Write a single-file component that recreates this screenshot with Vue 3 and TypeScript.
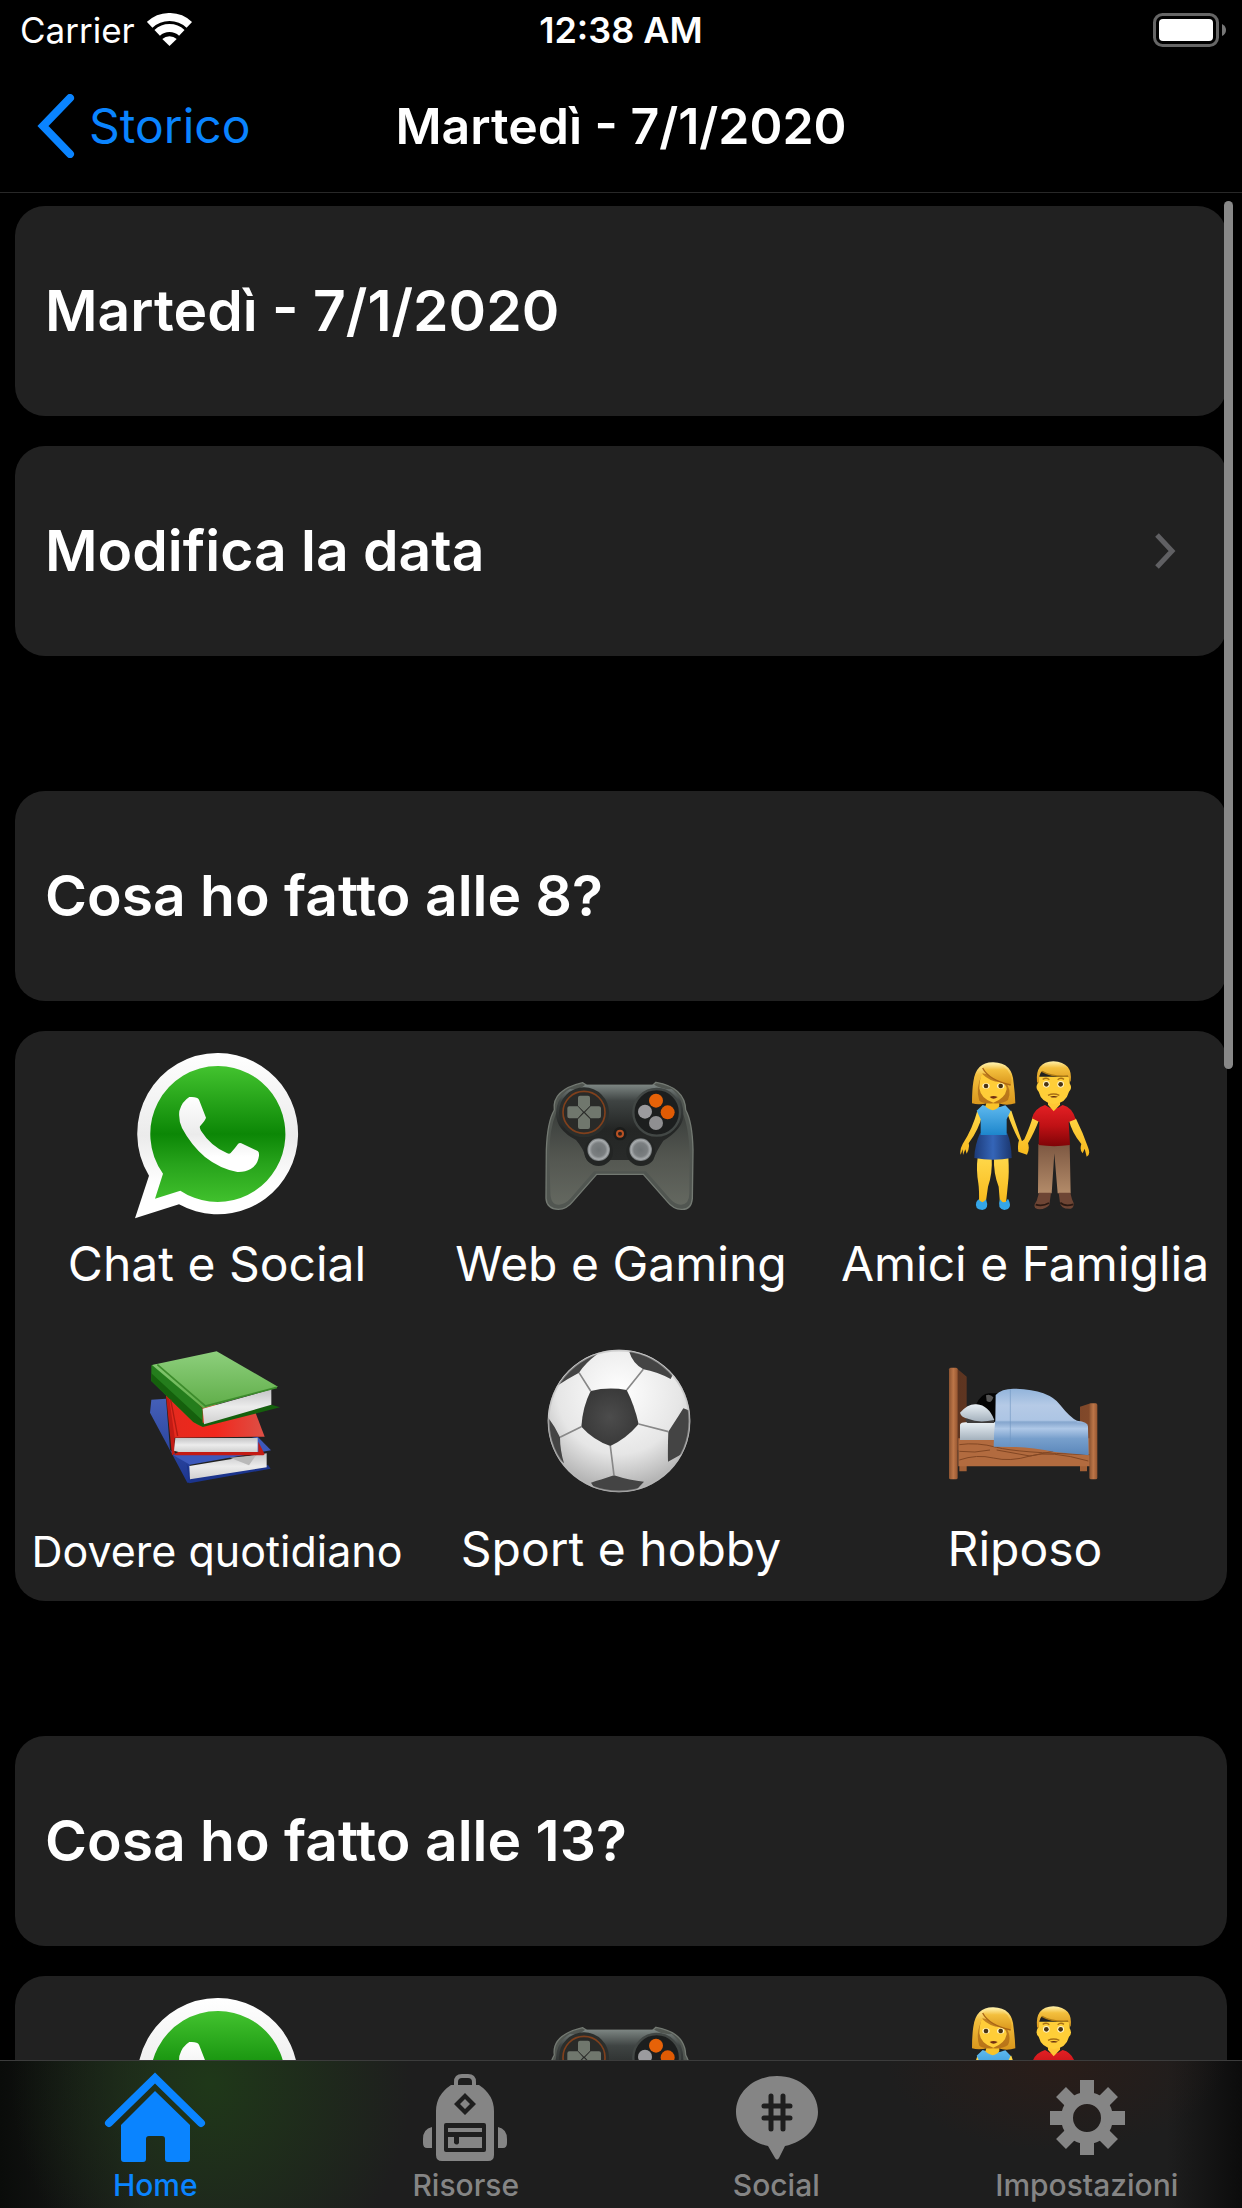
<script setup lang="ts">
interface Activity {
  icon: string
  label: string
  viewBox: string
  compact?: boolean
}

interface HourSection {
  hour: number
  items: Activity[]
  labelled: boolean
}

interface Tab {
  icon: string
  label: string
  active?: boolean
}

const dateLabel = 'Martedì - 7/1/2020'

const activities: Activity[] = [
  { icon: 'chat', label: 'Chat e Social', viewBox: '51 48 540 540' },
  { icon: 'gamepad', label: 'Web e Gaming', viewBox: '33 -12 540 540' },
  { icon: 'couple', label: 'Amici e Famiglia', viewBox: '15 18 540 540' },
  { icon: 'books', label: 'Dovere quotidiano', viewBox: '-9 3 540 540', compact: true },
  { icon: 'ball', label: 'Sport e hobby', viewBox: '3 3 540 540' },
  { icon: 'bed', label: 'Riposo', viewBox: '15 -57 540 540' },
]

// The last section only peeks out above the tab bar, so it carries one row of icons.
const sections: HourSection[] = [
  { hour: 8, items: activities, labelled: true },
  { hour: 13, items: activities.slice(0, 3), labelled: false },
]

const tabs: Tab[] = [
  { icon: 'home', label: 'Home', active: true },
  { icon: 'backpack', label: 'Risorse' },
  { icon: 'social', label: 'Social' },
  { icon: 'gear', label: 'Impostazioni' },
]
</script>

<template>
  <div class="app">
    <svg class="sprite" width="0" height="0" aria-hidden="true">
      <defs>
        <linearGradient id="gWhite" x1="0" y1="0" x2="0" y2="1">
          <stop offset="0" stop-color="#fff" /><stop offset=".5" stop-color="#ebebeb" /><stop offset=".8" stop-color="#fff" />
        </linearGradient>
        <linearGradient id="gGreen" x1="0" y1="0" x2="0" y2="1">
          <stop offset="0" stop-color="#43c32f" /><stop offset=".5" stop-color="#0c8706" /><stop offset=".72" stop-color="#27a31b" /><stop offset="1" stop-color="#41c12d" />
        </linearGradient>
        <linearGradient id="gPad" x1="0" y1="0" x2="0" y2="1">
          <stop offset="0" stop-color="#7d8683" /><stop offset=".2" stop-color="#3f4443" /><stop offset=".55" stop-color="#242625" /><stop offset="1" stop-color="#292b2a" />
        </linearGradient>
        <linearGradient id="gGrip" x1="0" y1="0" x2="0" y2="1">
          <stop offset="0" stop-color="#3a3e3b" /><stop offset=".5" stop-color="#545751" /><stop offset="1" stop-color="#646860" />
        </linearGradient>
        <radialGradient id="gStick">
          <stop offset="0" stop-color="#6f7476" /><stop offset=".6" stop-color="#7b7f81" /><stop offset=".85" stop-color="#a9adaf" /><stop offset="1" stop-color="#6d7173" />
        </radialGradient>
        <linearGradient id="gHair" x1="0" y1="0" x2="0" y2="1">
          <stop offset="0" stop-color="#fff0a8" /><stop offset=".3" stop-color="#f3bf3d" /><stop offset="1" stop-color="#d9961c" />
        </linearGradient>
        <linearGradient id="gSkin" x1="0" y1="0" x2="0" y2="1">
          <stop offset="0" stop-color="#ffd84a" /><stop offset="1" stop-color="#f8b91c" />
        </linearGradient>
        <linearGradient id="gTop" x1="0" y1="0" x2="0" y2="1">
          <stop offset="0" stop-color="#5fb9ee" /><stop offset="1" stop-color="#1d86cc" />
        </linearGradient>
        <linearGradient id="gSkirt">
          <stop offset="0" stop-color="#1d3b78" /><stop offset=".5" stop-color="#3465b8" /><stop offset="1" stop-color="#1c376f" />
        </linearGradient>
        <linearGradient id="gShirt" x1="0" y1="0" x2="0" y2="1">
          <stop offset="0" stop-color="#e32024" /><stop offset=".5" stop-color="#c01115" /><stop offset="1" stop-color="#7f0407" />
        </linearGradient>
        <linearGradient id="gPants" x1="0" y1="0" x2="0" y2="1">
          <stop offset="0" stop-color="#7d5842" /><stop offset="1" stop-color="#b38b69" />
        </linearGradient>
        <linearGradient id="gCover" x1="0" y1="0" x2="0" y2="1">
          <stop offset="0" stop-color="#8dcf7c" /><stop offset="1" stop-color="#5fad48" />
        </linearGradient>
        <linearGradient id="gPages" x1="0" y1="0" x2="0" y2="1">
          <stop offset="0" stop-color="#c4c4c6" /><stop offset=".5" stop-color="#ececec" /><stop offset="1" stop-color="#cfcfcf" />
        </linearGradient>
        <linearGradient id="gRed"><stop offset="0" stop-color="#e32a1e" /><stop offset=".5" stop-color="#f2271c" /><stop offset="1" stop-color="#dd5046" /></linearGradient>
        <linearGradient id="gBlue" x1="0" y1="0" x2="0" y2="1">
          <stop offset="0" stop-color="#4560b8" /><stop offset="1" stop-color="#1c3590" />
        </linearGradient>
        <radialGradient id="gBall" cx=".5" cy=".3" r=".72">
          <stop offset="0" stop-color="#fff" /><stop offset=".6" stop-color="#e6e6e6" /><stop offset="1" stop-color="#a8a8a8" />
        </radialGradient>
        <radialGradient id="gPatch"><stop offset="0" stop-color="#4c4c4c" /><stop offset="1" stop-color="#3a3a3a" /></radialGradient>
        <clipPath id="ballClip"><circle cx="267" cy="273" r="212" /></clipPath>
        <linearGradient id="gWood"><stop offset="0" stop-color="#8c5330" /><stop offset=".5" stop-color="#bd7648" /><stop offset="1" stop-color="#965631" /></linearGradient>
        <linearGradient id="gWoodDark"><stop offset="0" stop-color="#5c3420" /><stop offset="1" stop-color="#82492a" /></linearGradient>
        <linearGradient id="gBlanket" x1="0" y1="0" x2="0" y2="1">
          <stop offset="0" stop-color="#92b4db" /><stop offset=".25" stop-color="#b5cae6" /><stop offset=".47" stop-color="#adc5e4" /><stop offset=".52" stop-color="#8cabd2" /><stop offset=".6" stop-color="#afc8e7" /><stop offset=".75" stop-color="#779fcc" /><stop offset="1" stop-color="#5a86ba" />
        </linearGradient>
        <linearGradient id="gSheet" x1="0" y1="0" x2="0" y2="1">
          <stop offset="0" stop-color="#e9f0f5" /><stop offset="1" stop-color="#a4b1bd" />
        </linearGradient>
      </defs>

      <g id="chat">
        <path fill="url(#gWhite)" d="M325 69A241 242 0 1 1 207 523L75 565L117 437A241 242 0 0 1 325 69Z" />
        <path fill="url(#gGreen)" d="M325 108A203 204 0 1 1 211 482L135 506L159 431A203 204 0 0 1 325 108Z" />
        <path fill="url(#gWhite)" d="M238 201Q262 199 267 209L288 263Q287 269 270 289Q268 294 273 302Q302 348 352 370Q358 373 362 369Q375 355 384 342Q388 338 394 340L443 363Q448 366 447 377Q443 405 422 417Q405 427 382 426Q329 416 285 381Q243 345 216 294Q205 271 208 243Q216 214 238 201Z" />
      </g>

      <g id="gamepad">
        <path fill="#515651" stroke="#737972" stroke-width="4" d="M103 180Q95 120 188 98L200 106L398 106L408 97Q495 112 497 180Q517 215 519 300L517 445Q514 480 484 478Q460 478 442 455L370 373L230 373L158 455Q140 478 115 478Q80 476 78 445L79 300Q82 215 103 180Z" />
        <path fill="url(#gGrip)" d="M108 190Q88 240 88 310L91 425Q91 465 117 464Q137 462 153 443L222 364L378 364L448 444Q465 464 483 464Q508 463 508 430L509 310Q506 230 488 190Z" />
        <path fill="url(#gPad)" d="M196 104H402Q430 120 455 117Q492 145 490 200Q486 238 430 272Q408 305 400 330Q385 352 350 343L330 330H270L245 343Q210 350 198 325Q190 295 168 270Q108 240 108 190Q110 140 150 117Q175 122 196 104Z" />
        <circle cx="192" cy="187" r="75" fill="#2b2e2c" />
        <circle cx="192" cy="187" r="63" fill="#292a28" stroke="#80401c" stroke-width="5" />
        <path fill="#70776d" d="M174 143Q174 137 180 137H204Q210 137 210 143V167L192 185L174 167ZM174 231Q174 237 180 237H204Q210 237 210 231V207L192 189L174 207ZM148 169H173L189 187L173 205H148Q142 205 142 199V175Q142 169 148 169ZM237 169H212L195 187L212 205H237Q243 205 243 199V175Q243 169 237 169Z" />
        <circle cx="410" cy="187" r="70" fill="#1c1e1e" stroke="#424745" stroke-width="7" />
        <circle cx="408" cy="152" r="21" fill="#e66208" /><circle cx="443" cy="187" r="21" fill="#e05b04" />
        <circle cx="375" cy="185" r="21" fill="#9b9b9e" /><circle cx="408" cy="219" r="21" fill="#8f8f91" />
        <circle cx="300" cy="251" r="20" fill="#1a1c1b" /><circle cx="300" cy="251" r="9" fill="#2a211c" stroke="#b95123" stroke-width="6" />
        <circle cx="236" cy="305" r="43" fill="#232524" /><circle cx="362" cy="305" r="43" fill="#232524" />
        <circle cx="236" cy="299" r="34" fill="url(#gStick)" /><circle cx="362" cy="299" r="34" fill="url(#gStick)" />
      </g>

      <g id="couple">
        <path fill="url(#gSkin)" d="M142 212Q128 265 98 312Q88 330 92 344L98 328L99 345L106 328L110 341Q120 324 116 310Q146 270 158 222ZM230 215Q250 270 267 301Q262 315 265 335L291 344Q300 326 294 310Q312 280 328 238L308 232Q300 260 283 298L276 304Q258 255 244 212ZM416 238Q426 280 454 312Q448 330 458 340L464 326L470 350Q483 345 474 322Q460 280 438 236Z" />
        <path fill="url(#gSkin)" d="M143 352H185Q188 400 174 440L167 490H147Q148 450 145 430Q138 390 143 352ZM192 352H235Q238 400 234 430L228 490H210L206 440Q190 400 192 352Z" />
        <path fill="#35a6e8" d="M145 478Q158 495 168 478Q179 508 157 510Q132 508 139 486ZM210 478Q222 497 234 476Q250 506 223 510Q200 506 210 478Z" />
        <path fill="url(#gSkirt)" d="M150 280H232Q244 310 245 354Q190 364 133 354Q134 315 150 280Z" />
        <path fill="url(#gTop)" d="M158 195Q192 210 226 196L242 212L230 238V285H152V238L140 212Z" />
        <path fill="#f8c32a" d="M172 180H208V199Q190 222 166 199Z" />
        <path fill="url(#gHair)" d="M126 190Q126 150 130 125Q138 66 190 67Q248 68 251 130Q255 160 256 190Q230 198 205 190H172Q145 196 126 190Z" />
        <path fill="#a96516" d="M158 100Q135 145 148 182Q160 192 190 190Q218 192 234 180Q248 150 220 115Z" opacity=".7" />
        <path fill="#ffcd38" d="M156 101Q180 125 210 126Q230 131 230 148Q225 176 190 188Q153 178 148 145Q149 115 156 101Z" />
        <path fill="url(#gHair)" d="M158 84Q176 120 242 135Q248 122 241 106Q226 70 190 70Q170 70 158 84Z" />
        <path d="M158 84Q176 120 242 135" fill="none" stroke="#a96516" stroke-width="4" />
        <ellipse cx="168" cy="138" rx="11" ry="8" fill="#fff5ca" /><ellipse cx="212" cy="138" rx="11" ry="8" fill="#fff5ca" />
        <circle cx="168" cy="138" r="7" fill="#493313" /><circle cx="212" cy="138" r="7" fill="#493313" />
        <path d="M179 171Q190 165 203 171Q190 181 179 171Z" fill="#722f12" />
        <path fill="url(#gPants)" d="M325 312H419L422 460H383L373 340L365 460H324Z" />
        <path fill="#6e4534" d="M327 458H363L358 495Q345 510 322 507Q305 503 320 482ZM386 458H421L426 478Q438 500 423 506Q392 508 390 488Z" />
        <path stroke="#2b1912" stroke-width="5" d="M317 494Q338 500 357 489M391 488Q404 501 430 493" fill="none" />
        <path fill="url(#gShirt)" d="M345 195Q372 216 398 195Q427 202 437 238L416 246L420 315Q372 322 326 315L328 246L306 235Q313 205 345 195Z" />
        <path fill="#ffc634" d="M354 180H390V194L371 214L354 194Z" />
        <path fill="#ffce38" d="M325 110H419V130Q428 145 417 155Q408 190 371 192Q334 188 326 155Q315 145 323 130Z" />
        <path fill="url(#gHair)" d="M321 126Q315 66 370 64Q430 67 422 126L414 109Q370 113 336 94Q326 102 327 130Z" />
        <path d="M336 94Q365 111 414 108" fill="none" stroke="#ad7a14" stroke-width="4" />
        <circle cx="349" cy="133" r="10" fill="#fff4c7" /><circle cx="392" cy="133" r="10" fill="#fff4c7" />
        <circle cx="349" cy="133" r="7" fill="#493313" /><circle cx="392" cy="133" r="7" fill="#493313" />
        <path d="M338 118Q350 111 358 119M383 119Q392 111 402 118M354 166Q371 158 388 166" fill="none" stroke="#a97014" stroke-width="4" />
        <path d="M360 170Q371 166 384 170Q371 175 360 170Z" fill="#622b0e" />
      </g>

      <g id="books">
        <path fill="url(#gBlue)" d="M64 209L108 206L120 360L180 400V458H172Q120 360 60 248Z" />
        <path fill="#3d59bb" d="M130 376L180 404L423 361L383 320Z" />
        <path fill="#1b348c" d="M170 402L178 460L422 416L414 405L190 440Z" />
        <path fill="url(#gPages)" d="M178 408L410 370V412L180 448Z" />
        <path fill="#b9b9b9" d="M300 383L378 376L357 406Z" />
        <path fill="url(#gRed)" d="M108 195L376 247L404 320L132 323Z" />
        <path fill="#c31b14" d="M108 195L118 208L134 320V376H400L404 373L385 335V366H145L126 376Z" />
        <path fill="url(#gPages)" d="M136 324H383V366H146L132 362Z" />
        <path fill="#247d1c" d="M64 106L84 102L218 234V290Q205 286 190 276L64 153Z" />
        <path fill="#15600d" d="M64 130L216 270L218 290L190 276L64 153ZM214 280L424 224L450 232L218 291Z" />
        <path fill="url(#gPages)" d="M218 236L424 178V224L222 283Z" />
        <path fill="url(#gCover)" d="M66 105L260 64L444 170L220 235Z" />
        <path d="M82 104L226 228L441 172" fill="none" stroke="#3d8c2c" stroke-width="5" />
        <path d="M122 209L143 318" fill="none" stroke="#b01b12" stroke-width="4" />
      </g>

      <g id="ball">
        <circle cx="267" cy="273" r="214" fill="url(#gBall)" />
        <g clip-path="url(#ballClip)">
          <path fill="url(#gPatch)" d="M182 183Q235 170 290 180Q313 225 326 282Q290 325 241 348Q190 330 154 290Q158 230 182 183Z" />
          <path fill="#444" d="M85 165Q115 145 147 128Q165 100 202 72L170 45L60 130ZM298 66Q308 100 340 118Q380 125 422 147L435 120L340 45ZM460 235Q435 275 415 305Q413 350 414 395L460 370L500 250ZM183 458Q210 450 252 436Q300 452 342 455L300 500H210ZM54 262Q75 290 90 322Q90 360 102 400L60 370L45 290Z" />
          <path fill="none" stroke="#888" stroke-width="5" d="M147 128L182 183M340 118L290 180M326 282L415 305M241 348L252 436M154 290L90 322" />
        </g>
        <circle cx="267" cy="273" r="211" fill="none" stroke="#bbb" stroke-opacity=".6" stroke-width="5" />
      </g>

      <g id="bed">
        <path fill="url(#gWoodDark)" d="M80 55L110 80V300H82ZM450 170L482 160V330H450Z" />
        <path fill="#040404" d="M138 164Q155 128 180 130L202 130V215H165Z" /><path fill="#555" d="M168 136Q180 130 190 142Q184 163 170 153Z" />
        <path fill="#a26037" d="M88 345H110V364H88ZM450 345H471V364H450Z" />
        <path fill="#b26b3f" d="M85 265H480V349H85Z" />
        <path d="M88 284Q140 276 200 292T480 314M88 330Q140 312 190 324T300 318T475 333M200 300L300 318L370 304M88 304Q135 310 180 300" fill="none" stroke="#824724" stroke-width="3" />
        <path fill="url(#gSheet)" d="M90 224Q94 216 110 217H200V270H90Z" />
        <path fill="#3e3c3c" d="M104 207H192V219H112Z" />
        <path fill="url(#gSheet)" d="M90 188Q115 160 140 163Q176 166 193 210Q145 220 116 207Q93 202 90 188Z" />
        <path fill="url(#gBlanket)" d="M197 135Q215 116 250 116Q355 118 390 164Q420 202 441 212Q475 215 474 230L476 316Q420 310 375 306Q300 290 244 291L191 290Q191 250 196 210Z" />
        <path d="M241 118V290M194 216H440" fill="none" stroke="#6f96c2" stroke-opacity=".6" stroke-width="3" />
        <rect x="57" y="53" width="26" height="335" rx="5" fill="url(#gWood)" />
        <rect x="478" y="160" width="24" height="228" rx="5" fill="url(#gWood)" />
      </g>

      <g id="home">
        <path d="M9 56L55 11L101 56" fill="none" stroke="currentColor" stroke-width="8" stroke-linecap="round" />
        <path d="M55 24L90 58V92Q90 95 87 95H68Q65 95 65 92V72Q65 69 62 69H49Q46 69 46 72V92Q46 95 43 95H24Q21 95 21 92V58Z" fill="currentColor" />
      </g>
      <g id="backpack" fill="currentColor">
        <path d="M45 22V15Q45 9 51 9H57Q63 9 63 15V22" fill="none" stroke="currentColor" stroke-width="4" />
        <path fill-rule="evenodd" d="M40 18H68Q83 28 83 44V88Q83 94 77 94H31Q25 94 25 88V44Q25 28 40 18ZM54 26L43 37L54 48L65 37ZM54 32L59 37L54 42L49 37ZM35 56Q33 56 33 58V83Q33 85 35 85H73Q75 85 75 83V58Q75 56 73 56ZM37 61H71V65H37ZM37 70H43V76Q46 79 48 76V70H71V81H37Z" />
        <path d="M21 60V81H16Q12 81 12 76V72Q12 62 21 60ZM87 60V81H92Q96 81 96 76V72Q96 62 87 60Z" />
      </g>
      <g id="social">
        <path d="M47 79C28 75 15 61 15 45C15 25 33 9 56 9S97 25 97 45C97 61 83 75 64 79L58 91Q56 94 54 91Z" fill="currentColor" />
        <path d="M50 29V62M62 29V62M43 39H69M43 51H69" fill="none" stroke="#1e1e1e" stroke-width="5" stroke-linecap="round" />
      </g>
      <g id="gear" fill="none" stroke="currentColor">
        <circle cx="55" cy="51" r="20" stroke-width="12" />
        <path stroke-width="14" d="M55 13V32M55 70V88M18 51H36M74 51H93M29 25L42 38M81 25L68 38M29 77L42 64M81 77L68 64" />
      </g>
    </svg>

    <header class="top">
      <div class="status">
        <div class="carrier">
          <span>Carrier</span>
          <svg class="wifi" viewBox="0 0 46 34" aria-hidden="true">
            <path d="M2.700 11.800A29 29 0 0 1 42.300 11.800M10.200 19.800A18 18 0 0 1 34.800 19.800" fill="none" stroke="#fff" stroke-width="8" />
            <path d="M22.500 33L15.300 26A10.500 10.500 0 0 1 29.700 26Z" fill="#fff" />
          </svg>
        </div>
        <span class="clock">12:38 AM</span>
        <svg class="battery" viewBox="0 0 74 34" aria-hidden="true">
          <rect x="1.500" y="1.500" width="63" height="31" rx="8" fill="none" stroke="#666" stroke-width="3" />
          <rect x="6" y="6" width="54" height="22" rx="4" fill="#fff" />
          <path d="M69 11Q73 13 73 17T69 23Z" fill="#777" />
        </svg>
      </div>
      <nav class="navbar" aria-label="Navigazione">
        <a class="back" href="#storico">
          <svg class="back-icon" viewBox="0 0 38 64" aria-hidden="true">
            <path d="M33 4L6 32L33 60" fill="none" stroke="currentColor" stroke-width="8" stroke-linecap="round" />
          </svg>
          <span>Storico</span>
        </a>
        <h1 class="nav-title">{{ dateLabel }}</h1>
      </nav>
    </header>

    <div class="body">
      <main class="content">
        <section class="section">
          <h2 class="card">{{ dateLabel }}</h2>
          <button class="card" type="button">
            <span>Modifica la data</span>
            <svg class="disclosure" viewBox="0 0 24 40" aria-hidden="true">
              <path d="M4 4L19 20L4 36" fill="none" stroke="#606063" stroke-width="5" />
            </svg>
          </button>
        </section>

        <section v-for="s in sections" :key="s.hour" class="section">
          <h2 class="card">Cosa ho fatto alle {{ s.hour }}?</h2>
          <div class="grid">
            <button v-for="a in s.items" :key="a.icon" class="activity" type="button" :aria-label="a.label">
              <svg class="activity-icon" :viewBox="a.viewBox" aria-hidden="true"><use :href="'#' + a.icon" /></svg>
              <span v-if="s.labelled" class="activity-label" :class="{ compact: a.compact }">{{ a.label }}</span>
            </button>
          </div>
        </section>
      </main>
      <div class="thumb" aria-hidden="true"></div>
    </div>

    <nav class="tabs" aria-label="Sezioni">
      <a v-for="t in tabs" :key="t.icon" class="tab" :class="{ active: t.active }" :href="'#tab-' + t.icon">
        <svg class="tab-icon" viewBox="0 0 110 100" aria-hidden="true"><use :href="'#' + t.icon" /></svg>
        <span>{{ t.label }}</span>
      </a>
    </nav>
  </div>
</template>

<style>
body {
  background: #000;
}
</style>

<style scoped>
.app {
  display: flex;
  flex-direction: column;
  height: 100vh;
  color: #fff;
  background: #000;
  font-family: Inter, "Liberation Sans", sans-serif;
}

.app * {
  box-sizing: border-box;
}

.sprite {
  position: absolute;
}

.top {
  flex: none;
  border-bottom: 1px solid #282828;
}

.status {
  display: grid;
  grid-template-columns: 1fr auto 1fr;
  align-items: center;
  height: 60px;
  padding: 0 15px;
  font-size: 36px;
  line-height: 44px;
}

.carrier {
  display: flex;
  align-items: center;
  gap: 12px;
  padding-left: 5px;
  font-size: 35px;
}

.wifi {
  width: 46px;
  height: 34px;
}

.clock {
  font-weight: 600;
}

.battery {
  justify-self: end;
  width: 74px;
  height: 34px;
}

.navbar {
  display: grid;
  grid-template-columns: 1fr auto 1fr;
  align-items: center;
  height: 132px;
  padding: 0 37px;
  font-size: 48px;
  line-height: 60px;
}

.back {
  display: flex;
  align-items: center;
  gap: 14px;
  color: #0a84ff;
  text-decoration: none;
}

.back-icon {
  width: 38px;
  height: 64px;
}

.nav-title {
  margin: 0;
  font-size: 50px;
  font-weight: 600;
}

.body {
  position: relative;
  flex: 1;
  min-height: 0;
}

.content {
  display: flex;
  flex-direction: column;
  gap: 135px;
  height: 100%;
  padding: 13px 15px;
  overflow-y: auto;
  scrollbar-width: none;
}

.section {
  display: flex;
  flex: none;
  flex-direction: column;
  gap: 30px;
}

.card {
  display: flex;
  align-items: center;
  justify-content: space-between;
  height: 210px;
  margin: 0;
  padding: 0 50px 0 30px;
  border: 0;
  border-radius: 30px;
  color: #fff;
  background: #212121;
  font: inherit;
  font-size: 57px;
  font-weight: 600;
  line-height: 70px;
  text-align: left;
}

.disclosure {
  width: 24px;
  height: 40px;
}

.grid {
  display: grid;
  grid-template-columns: repeat(3, 1fr);
  border-radius: 30px;
  background: #212121;
}

.activity {
  display: flex;
  flex-direction: column;
  align-items: center;
  gap: 8px;
  height: 285px;
  padding: 15px 0 0;
  border: 0;
  color: #fff;
  background: none;
  font: inherit;
}

.activity-icon {
  width: 180px;
  height: 180px;
}

.activity-label {
  font-size: 48px;
  line-height: 60px;
  white-space: nowrap;
}

.compact {
  font-size: 43px;
  line-height: 64px;
}

.thumb {
  position: absolute;
  top: 8px;
  right: 9px;
  width: 9px;
  height: 868px;
  border-radius: 5px;
  background: #888;
}

.tabs {
  display: grid;
  flex: none;
  grid-template-columns: repeat(4, 1fr);
  height: 148px;
  border-top: 1px solid #3c3c3c;
  background:
    radial-gradient(ellipse 200px 220px at 17% 15%, #1f3819, transparent),
    radial-gradient(ellipse 170px 90px at 85% 0%, #2a1d19, transparent),
    linear-gradient(90deg, #0a0c0a, #1e1e1e 12%, #1e1e1e 94%, #0c0c0c);
}

.tab {
  display: flex;
  flex-direction: column;
  align-items: center;
  padding-top: 6px;
  color: #858585;
  font-size: 30px;
  font-weight: 500;
  line-height: 36px;
  text-decoration: none;
}

.active {
  color: #0a84ff;
}

.tab-icon {
  width: 110px;
  height: 100px;
}
</style>
